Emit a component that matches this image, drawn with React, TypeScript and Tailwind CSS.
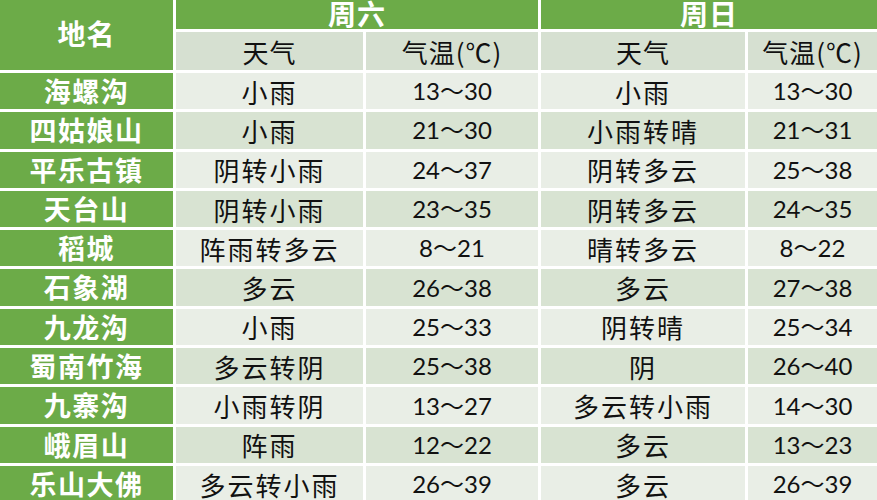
const rows = [
  ["海螺沟", "小雨", "13～30", "小雨", "13～30"],
  ["四姑娘山", "小雨", "21～30", "小雨转晴", "21～31"],
  ["平乐古镇", "阴转小雨", "24～37", "阴转多云", "25～38"],
  ["天台山", "阴转小雨", "23～35", "阴转多云", "24～35"],
  ["稻城", "阵雨转多云", "8～21", "晴转多云", "8～22"],
  ["石象湖", "多云", "26～38", "多云", "27～38"],
  ["九龙沟", "小雨", "25～33", "阴转晴", "25～34"],
  ["蜀南竹海", "多云转阴", "25～38", "阴", "26～40"],
  ["九寨沟", "小雨转阴", "13～27", "多云转小雨", "14～30"],
  ["峨眉山", "阵雨", "12～22", "多云", "13～23"],
  ["乐山大佛", "多云转小雨", "26～39", "多云", "26～39"],
]

const cjk = "font-['Noto_Sans_CJK_SC',sans-serif]"
const num = "font-['Lato','Noto_Sans_CJK_SC',sans-serif]"

export default function App() {
  return (
    <div className="w-[877px] h-[500px] overflow-hidden bg-white">
      <div
        className={`-mt-[4px] grid grid-cols-[173px_187px_172px_204px_1fr] grid-rows-[33px_38px] auto-rows-[36.3px] gap-[3px] bg-white ${cjk}`}
      >
        {/* header */}
        <div className="row-span-2 bg-[#6cab48] flex items-center justify-center text-white text-[28px] font-bold tracking-[1px]">
          地名
        </div>
        <div className="col-span-2 bg-[#6cab48] flex items-center justify-center text-white text-[28px] font-bold leading-none tracking-[1px]">
          周六
        </div>
        <div className="col-span-2 bg-[#6cab48] flex items-center justify-center text-white text-[28px] font-bold leading-none tracking-[1px]">
          周日
        </div>
        <div className="bg-[#d6e0d1] flex items-center justify-center text-[26px] tracking-[1px] text-[#111]">天气</div>
        <div className="bg-[#d6e0d1] flex items-center justify-center text-[26px] tracking-[1px] text-[#111]">气温(℃)</div>
        <div className="bg-[#d6e0d1] flex items-center justify-center text-[26px] tracking-[1px] text-[#111]">天气</div>
        <div className="bg-[#d6e0d1] flex items-center justify-center text-[26px] tracking-[1px] text-[#111]">气温(℃)</div>

        {/* body */}
        {rows.map((r, i) => {
          const bg = i % 2 === 0 ? "bg-[#e9eee6]" : "bg-[#d8e3d2]"
          return [
            <div
              key={`${i}-0`}
              className="bg-[#6cab48] flex items-center justify-center text-white text-[27px] font-bold tracking-[1.5px]"
            >
              {r[0]}
            </div>,
            <div key={`${i}-1`} className={`${bg} flex items-center justify-center text-[26px] tracking-[2px] text-[#111]`}>
              {r[1]}
            </div>,
            <div key={`${i}-2`} className={`${bg} flex items-center justify-center text-[24px] text-[#111] ${num}`}>
              {r[2]}
            </div>,
            <div key={`${i}-3`} className={`${bg} flex items-center justify-center text-[26px] tracking-[2px] text-[#111]`}>
              {r[3]}
            </div>,
            <div key={`${i}-4`} className={`${bg} flex items-center justify-center text-[24px] text-[#111] ${num}`}>
              {r[4]}
            </div>,
          ]
        })}
      </div>
    </div>
  )
}
